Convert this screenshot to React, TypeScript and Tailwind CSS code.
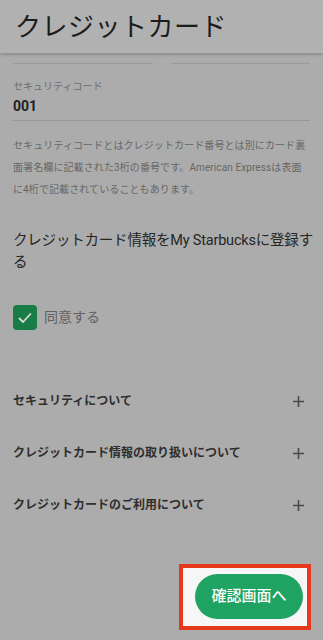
import React from 'react';

const font = { fontFamily: 'Roboto, "Noto Sans CJK JP", "Noto Sans", sans-serif' };

const AccordionRow: React.FC<{ label: string }> = ({ label }) => (
  <div className="flex h-[52px] items-center justify-between pr-[5px]">
    <span className="text-[12px] font-bold text-[#2e2e2e]">{label}</span>
    <svg width="13" height="13" viewBox="0 0 13 13" aria-hidden="true">
      <path d="M6.5 1v11M1 6.5h11" stroke="#4a4a4a" strokeWidth="1.6" />
    </svg>
  </div>
);

export default function App() {
  return (
    <div className="flex h-[640px] w-[323px] flex-col overflow-hidden bg-[#acacac]" style={font}>
      <header className="flex h-[53px] shrink-0 items-center bg-[#b1b1b1] pl-[15px] shadow-[0_2px_3px_rgba(0,0,0,0.18)]">
        <h1 className="text-[26px] leading-none tracking-[0.5px] text-[#1c1c1c]">クレジットカード</h1>
      </header>

      <main className="flex flex-1 flex-col px-[13px]">
        <div className="mt-[10px] flex gap-[18px]">
          <div className="h-px flex-1 bg-[#9a9a9a]" />
          <div className="h-px flex-1 bg-[#9a9a9a]" />
        </div>

        <div className="mt-[16px] border-b border-[#979797] pb-[6px]">
          <div className="text-[10px] leading-[14px] text-[#6e6e6e]">セキュリティコード</div>
          <div className="mt-[4px] text-[14px] font-bold leading-[16px] text-[#222]">001</div>
        </div>

        <p className="mt-[14px] text-[10px] leading-[22px] tracking-[0.1px] text-[#666]">
          セキュリティコードとはクレジットカード番号とは別にカード裏面署名欄に記載された3桁の番号です。American Expressは表面に4桁で記載されていることもあります。
        </p>

        <h2 className="mt-[29px] mr-[-4px] text-[14.5px] leading-[22px] tracking-[-0.2px] text-[#262626]">
          クレジットカード情報をMy Starbucksに登録する
        </h2>

        <label className="mt-[31px] flex items-center gap-[7px]">
          <span className="flex h-[25px] w-[24px] items-center justify-center rounded-[4px] bg-[#177c46]">
            <svg width="16" height="16" viewBox="0 0 16 16" aria-hidden="true">
              <path d="M2.5 8.5l3.5 3.5 7.5-8" fill="none" stroke="#d9d9d9" strokeWidth="1.8" strokeLinecap="round" strokeLinejoin="round" />
            </svg>
          </span>
          <span className="text-[14px] text-[#616161]">同意する</span>
        </label>

        <div className="mt-[45px] flex flex-col">
          <AccordionRow label="セキュリティについて" />
          <AccordionRow label="クレジットカード情報の取り扱いについて" />
          <AccordionRow label="クレジットカードのご利用について" />
        </div>

        <div className="mt-auto mb-[10px] flex justify-end">
          <div className="mr-[-1px] flex h-[66px] w-[132px] items-center justify-center border-[4px] border-[#e6391c] bg-[#f6f6f6]">
            <button className="mt-[-2px] ml-[8px] flex h-[45px] w-[108px] items-center justify-center rounded-full bg-[#1fa363] text-[15px] font-medium text-white">
              確認画面へ
            </button>
          </div>
        </div>
      </main>
    </div>
  );
}
